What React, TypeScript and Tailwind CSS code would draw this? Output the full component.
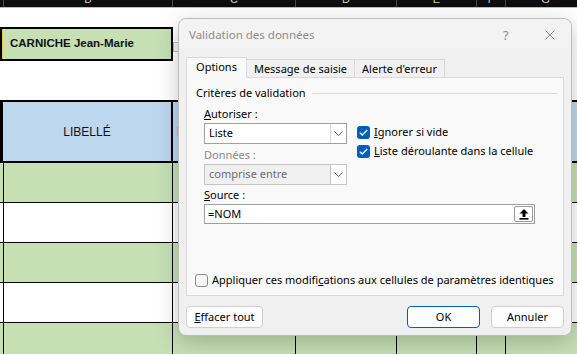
import React from "react";

const W = ["w-[4px]", "w-[169px]", "w-[123px]", "w-[101px]", "w-[80px]", "w-[29px]"];

function DataRow({ green }: { green: boolean }) {
  const bg = green ? "bg-[#c6e0b4]" : "bg-white";
  return (
    <div className={`flex h-[40px] border-b border-black ${bg}`}>
      <div className="w-[4px] border-r border-black" />
      <div className="w-[169px] border-r border-black" />
      <div className="w-[123px] border-r border-black" />
      <div className="w-[101px] border-r border-black" />
      <div className="w-[80px] border-r border-black" />
      <div className="w-[29px] border-r border-black" />
      <div className="flex-1" />
    </div>
  );
}

function Sheet() {
  const letters = ["", "B", "C", "D", "E", "F"];
  return (
    <div className="flex flex-col font-['Liberation_Sans',Arial,sans-serif]">
      {/* column header strip */}
      <div className="flex h-[8px] bg-[#0e0e0e] border-b border-[#bdbdbd]">
        {W.map((w, i) => (
          <div key={i} className={`${w} h-[7px] overflow-hidden flex justify-center border-r border-[#4a4a4a]`}>
            <span className="text-[11px] leading-[11px] -mt-[6px] text-[#cfcfcf]">{letters[i]}</span>
          </div>
        ))}
        <div className="flex-1 h-[7px] overflow-hidden flex justify-center">
          <span className="text-[11px] leading-[11px] -mt-[6px] text-[#cfcfcf] ml-[8px]">G</span>
        </div>
      </div>
      {/* row 1 */}
      <div className="h-[19px] bg-white" />
      {/* row 2 */}
      <div className="flex h-[34px] bg-white">
        <div className="w-[173px] border-2 border-black bg-[#c6e0b4] flex items-center relative">
          <div className="w-[1px] self-stretch bg-[#f2c14e]" />
          <span className="ml-[7px] text-[11.5px] font-bold text-[#111]">CARNICHE Jean-Marie</span>
        </div>
        <div className="mt-[15px] w-[6px] h-[10px] border border-[#bdbdbd] bg-[#f3f3f3]" />
      </div>
      {/* row 3 */}
      <div className="h-[39px] bg-white" />
      {/* header row */}
      <div className="flex h-[63px] border-y-2 border-black bg-[#bdd7ee]">
        <div className="w-[173px] border-l-[3px] border-r-2 border-black flex items-center justify-center">
          <span className="text-[12px] text-[#111]">LIBELLÉ</span>
        </div>
        <div className="w-[123px] border-r-2 border-black flex items-center pl-[4px]">
          <span className="text-[12px] text-[#111]">NOM</span>
        </div>
        <div className="w-[100px] border-r-2 border-black" />
        <div className="w-[80px] border-r-2 border-black" />
        <div className="w-[29px] border-r-2 border-black" />
        <div className="flex-1" />
      </div>
      <DataRow green />
      <DataRow green={false} />
      <DataRow green />
      <DataRow green={false} />
      <DataRow green />
    </div>
  );
}

function Chevron() {
  return (
    <svg width="9" height="5" viewBox="0 0 9 5" fill="none">
      <polyline points="0.5,0.5 4.5,4.5 8.5,0.5" stroke="#5f5f5f" strokeWidth="1" />
    </svg>
  );
}

function Check() {
  return (
    <div className="w-[13px] h-[13px] rounded-[3px] bg-[#005fb8] flex items-center justify-center">
      <svg width="9" height="7" viewBox="0 0 9 7" fill="none">
        <polyline points="0.8,3.6 3.2,6 8.2,1" stroke="white" strokeWidth="1.3" />
      </svg>
    </div>
  );
}

function Dialog() {
  return (
    <div className="absolute left-[178px] top-[18px] w-[394px] h-[318px] rounded-[8px] border border-[#bcbcbc] bg-[#f0f0f0] shadow-[0_6px_22px_rgba(0,0,0,0.22)] font-['Noto_Sans',sans-serif] text-[11px] text-black">
      {/* title bar */}
      <div className="h-[29px] rounded-t-[8px] bg-[#f3f3f3] flex items-center pl-[10px] pt-[2px] relative">
        <span className="text-[11.5px] text-[#8c8c8c]">Validation des données</span>
        <span className="absolute left-[324px] top-[7px] text-[13px] text-[#8c8c8c]">?</span>
        <svg className="absolute left-[366px] top-[11px]" width="10" height="10" viewBox="0 0 10 10" fill="none">
          <path d="M0.5 0.5 L9.5 9.5 M9.5 0.5 L0.5 9.5" stroke="#8c8c8c" strokeWidth="1" />
        </svg>
      </div>
      <div className="px-[7px] pt-[9px]">
        {/* tabs */}
        <div className="flex items-end h-[21px] relative z-10 -mb-[1px]">
          <div className="w-[61px] h-[21px] bg-[#f9f9f9] border border-b-0 border-[#d9d9d9] flex items-center justify-center pb-[1px]">
            Options
          </div>
          <div className="w-[108px] h-[19px] border-t border-r border-[#d9d9d9] flex items-center justify-center">
            Message de saisie
          </div>
          <div className="w-[90px] h-[19px] border-t border-r border-[#d9d9d9] flex items-center justify-center">
            Alerte d'erreur
          </div>
        </div>
        {/* panel */}
        <div className="w-[378px] h-[219px] bg-[#f9f9f9] border border-[#d9d9d9] flex flex-col pt-[7px] pb-[7px]">
          <div className="flex items-center h-[16px] pl-[9px] pr-[6px]">
            <span>Critères de validation</span>
            <div className="flex-1 h-px bg-[#d9d9d9] ml-[6px]" />
          </div>
          <div className="flex pl-[17px] mt-[5px]">
            <div className="w-[143px] flex flex-col">
              <div className="h-[16px] flex items-center">
                <span><span className="underline">A</span>utoriser :</span>
              </div>
              <div className="mt-[1px] h-[21px] bg-white border border-[#a0a0a0] flex items-center">
                <span className="flex-1 pl-[4px]">Liste</span>
                <div className="w-[16px] h-full border-l border-[#dadada] flex items-center justify-center">
                  <Chevron />
                </div>
              </div>
              <div className="mt-[3px] h-[16px] flex items-center text-[#8a8a8a]">Données :</div>
              <div className="mt-[1px] h-[21px] bg-[#f0f0f0] border border-[#c4c4c4] flex items-center">
                <span className="flex-1 pl-[4px] text-[#6d6d6d]">comprise entre</span>
                <div className="w-[16px] h-full bg-white border-l border-[#c4c4c4] flex items-center justify-center">
                  <Chevron />
                </div>
              </div>
            </div>
            <div className="ml-[10px] mt-[17px] flex flex-col">
              <div className="h-[19px] flex items-center gap-[4px]">
                <Check />
                <span><span className="underline">I</span>gnorer si vide</span>
              </div>
              <div className="h-[19px] flex items-center gap-[4px]">
                <Check />
                <span><span className="underline">L</span>iste déroulante dans la cellule</span>
              </div>
            </div>
          </div>
          <div className="pl-[17px] mt-[2px] h-[16px] flex items-center">
            <span><span className="underline">S</span>ource :</span>
          </div>
          <div className="ml-[17px] mt-[1px] w-[331px] h-[20px] bg-white border border-[#a0a0a0] flex items-center">
            <span className="flex-1 pl-[3px]">=NOM</span>
            <div className="w-[19px] h-[16px] mr-[1px] bg-white border border-[#9a9a9a] rounded-[2px] flex items-center justify-center">
              <svg width="10" height="11" viewBox="0 0 10 11" fill="black">
                <path d="M5 0 L9.5 4.5 H6.5 V8 H3.5 V4.5 H0.5 Z" />
                <rect x="0.5" y="9" width="9" height="1.6" />
              </svg>
            </div>
          </div>
          <div className="mt-auto h-[16px] flex items-center pl-[8px] gap-[4px]">
            <div className="w-[13px] h-[13px] rounded-[3px] border border-[#8a8a8a] bg-[#f6f6f6]" />
            <span>Appliquer ces modifi<span className="underline">c</span>ations aux cellules de paramètres identiques</span>
          </div>
        </div>
        {/* buttons */}
        <div className="flex mt-[10px]">
          <div className="w-[77px] h-[22px] bg-[#fdfdfd] border border-[#d0d0d0] rounded-[4px] flex items-center justify-center">
            <span><span className="underline">E</span>ffacer tout</span>
          </div>
          <div className="flex-1" />
          <div className="w-[73px] h-[22px] bg-[#fdfdfd] border border-[#005fb8] rounded-[4px] flex items-center justify-center">OK</div>
          <div className="w-[73px] h-[22px] ml-[11px] bg-[#fdfdfd] border border-[#d0d0d0] rounded-[4px] flex items-center justify-center">Annuler</div>
        </div>
      </div>
    </div>
  );
}

export default function App() {
  return (
    <div className="relative w-[577px] h-[354px] overflow-hidden bg-white">
      <Sheet />
      <Dialog />
    </div>
  );
}
